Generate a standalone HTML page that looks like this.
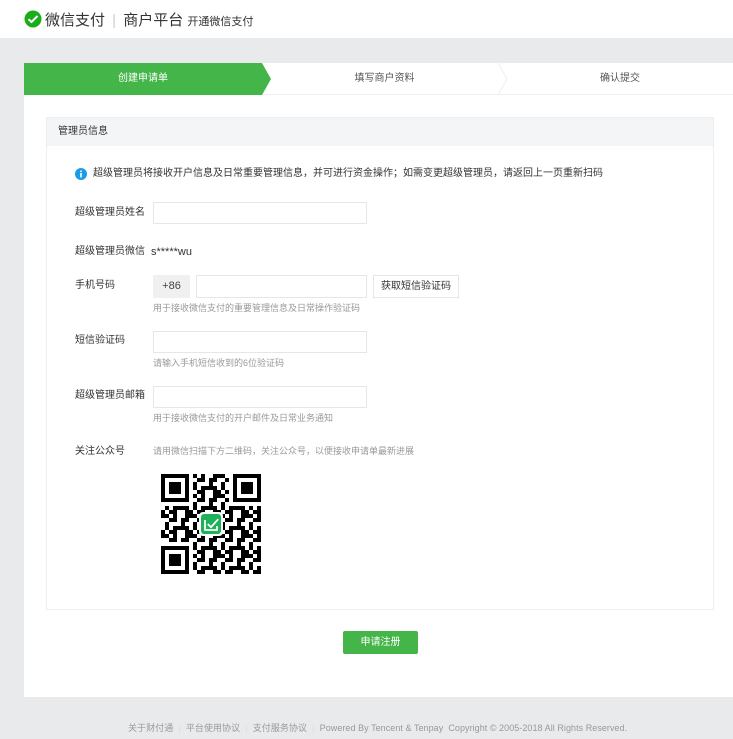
<!DOCTYPE html>
<html><head><meta charset="utf-8"><style>
*{margin:0;padding:0;box-sizing:border-box}
body{width:733px;height:739px;background:#e9eaec;font-family:"Liberation Sans","Noto Sans CJK SC",sans-serif;position:relative;overflow:hidden;color:#353535}
.hdr{position:absolute;left:0;top:0;width:733px;height:38px;background:#fff}
.card{position:absolute;left:24px;top:63px;width:709px;height:634px;background:#fff}
.steps{position:absolute;left:0;top:0;width:709px;height:32px;border-bottom:1px solid #eee}
.st{position:absolute;top:0;height:32px;line-height:32px;font-size:10px;color:#555;text-align:center}
.sec{position:absolute;left:22px;top:54px;width:668px;height:493px;border:1px solid #eee}
.sech{height:28px;background:#f4f5f7;line-height:28px;font-size:10px;padding-left:11px;color:#333}
.lab{position:absolute;left:28px;font-size:10px;color:#333;line-height:12px}
.inp{position:absolute;height:22px;border:1px solid #e6e6e6;background:#fff}
.tip{position:absolute;left:106px;font-size:9px;color:#999;line-height:11px}
.ft{position:absolute;top:721px;left:128px;font-size:9px;color:#999;white-space:nowrap;letter-spacing:.05px}
</style></head><body>
<div class="hdr">
<svg style="position:absolute;left:24px;top:10px" width="18" height="18" viewBox="0 0 18 18"><circle cx="9" cy="9" r="8.5" fill="#1aad19"/><path d="M4.5 9.2l3 2.8 6-6" stroke="#fff" stroke-width="2" fill="none"/></svg>
<div style="position:absolute;left:45px;top:9px;font-size:15px;color:#333;white-space:nowrap">微信支付 <span style="color:#ccc;margin:0 3px">|</span> 商户平台 <span style="font-size:11px;color:#333">开通微信支付</span></div>
</div>
<div class="card">
<div class="steps">
<svg style="position:absolute;left:0;top:0" width="709" height="33"><polygon points="0,0 238,0 247,16 238,32 0,32" fill="#44b549"/><polyline points="474,0 483,16 474,32" fill="none" stroke="#eee"/></svg>
<div class="st" style="left:0;width:238px;color:#fff">创建申请单</div>
<div class="st" style="left:247px;width:227px">填写商户资料</div>
<div class="st" style="left:483px;width:226px">确认提交</div>
</div>
<div class="sec"><div class="sech">管理员信息</div></div>
</div>
<svg style="position:absolute;left:75px;top:168px" width="12" height="12"><circle cx="6" cy="6" r="6" fill="#1a9de6"/><rect x="5.2" y="2.5" width="1.6" height="1.6" fill="#fff"/><rect x="5.2" y="5" width="1.6" height="4.5" fill="#fff"/></svg>
<div style="position:absolute;left:93px;top:168px;font-size:10px;color:#333;white-space:nowrap;line-height:12px">超级管理员将接收开户信息及日常重要管理信息，并可进行资金操作；如需变更超级管理员，请返回上一页重新扫码</div>
<div class="lab" style="left:75px;top:207px">超级管理员姓名</div>
<div class="inp" style="left:153px;top:202px;width:214px"></div>
<div class="lab" style="left:75px;top:246px">超级管理员微信</div>
<div style="position:absolute;left:151px;top:246px;font-size:11px;color:#333;line-height:12px">s*****wu</div>
<div class="lab" style="left:75px;top:280px">手机号码</div>
<div style="position:absolute;left:153px;top:275px;width:37px;height:23px;background:#f0f0f0;font-size:11px;line-height:23px;text-align:center;color:#444">+86</div>
<div class="inp" style="left:196px;top:275px;width:171px;height:23px"></div>
<div class="inp" style="left:373px;top:275px;width:86px;height:23px;font-size:10px;line-height:21px;text-align:center;color:#333">获取短信验证码</div>
<div class="tip" style="left:153px;top:303px">用于接收微信支付的重要管理信息及日常操作验证码</div>
<div class="lab" style="left:75px;top:335px">短信验证码</div>
<div class="inp" style="left:153px;top:331px;width:214px"></div>
<div class="tip" style="left:153px;top:358px">请输入手机短信收到的6位验证码</div>
<div class="lab" style="left:75px;top:390px">超级管理员邮箱</div>
<div class="inp" style="left:153px;top:386px;width:214px"></div>
<div class="tip" style="left:153px;top:413px">用于接收微信支付的开户邮件及日常业务通知</div>
<div class="lab" style="left:75px;top:446px">关注公众号</div>
<div class="tip" style="left:153px;top:446px">请用微信扫描下方二维码，关注公众号，以便接收申请单最新进展</div>
<svg style="position:absolute;left:161px;top:474px" width="100" height="100" viewBox="0 0 25 25">
<defs><pattern id="p" width="7" height="5" patternUnits="userSpaceOnUse"><rect x="0" y="0" width="2" height="1"/><rect x="3" y="0" width="1" height="2"/><rect x="5" y="1" width="2" height="1"/><rect x="1" y="2" width="1" height="2"/><rect x="4" y="3" width="2" height="1"/><rect x="0" y="4" width="1" height="1"/><rect x="2" y="4" width="2" height="1"/><rect x="6" y="3" width="1" height="2"/><rect x="2" y="1" width="1" height="1"/><rect x="5" y="2" width="1" height="1"/><rect x="3" y="3" width="1" height="1"/><rect x="6" y="0" width="1" height="1"/></pattern></defs>
<rect width="25" height="25" fill="url(#p)"/>
<g><rect x="0" y="0" width="8" height="8" fill="#fff"/><rect x="17" y="0" width="8" height="8" fill="#fff"/><rect x="0" y="17" width="8" height="8" fill="#fff"/>
<path d="M0 0h7v7h-7zM1 1v5h5v-5zM2 2h3v3h-3z M18 0h7v7h-7zM19 1v5h5v-5zM20 2h3v3h-3z M0 18h7v7h-7zM1 19v5h5v-5zM2 20h3v3h-3z" fill-rule="evenodd" fill="#000"/></g>
<rect x="9.5" y="9.5" width="6" height="6" rx="1" fill="#fff"/><rect x="10" y="10" width="5" height="5" rx=".8" fill="#1fb15a"/><path d="M11 11.5v2.5h3v-1M11.7 12.5l.8.8 1.8-2" stroke="#fff" stroke-width=".45" fill="none"/>
</svg>
<div style="position:absolute;left:343px;top:631px;width:75px;height:23px;background:#44b549;border-radius:2px;color:#fff;font-size:10px;line-height:23px;text-align:center">申请注册</div>
<div class="ft">关于财付通 &nbsp;<span style="color:#ddd">|</span>&nbsp; 平台使用协议 &nbsp;<span style="color:#ddd">|</span>&nbsp; 支付服务协议 &nbsp;<span style="color:#ddd">|</span>&nbsp; Powered By Tencent &amp; Tenpay &nbsp;Copyright © 2005-2018 All Rights Reserved.</div>
</body></html>
